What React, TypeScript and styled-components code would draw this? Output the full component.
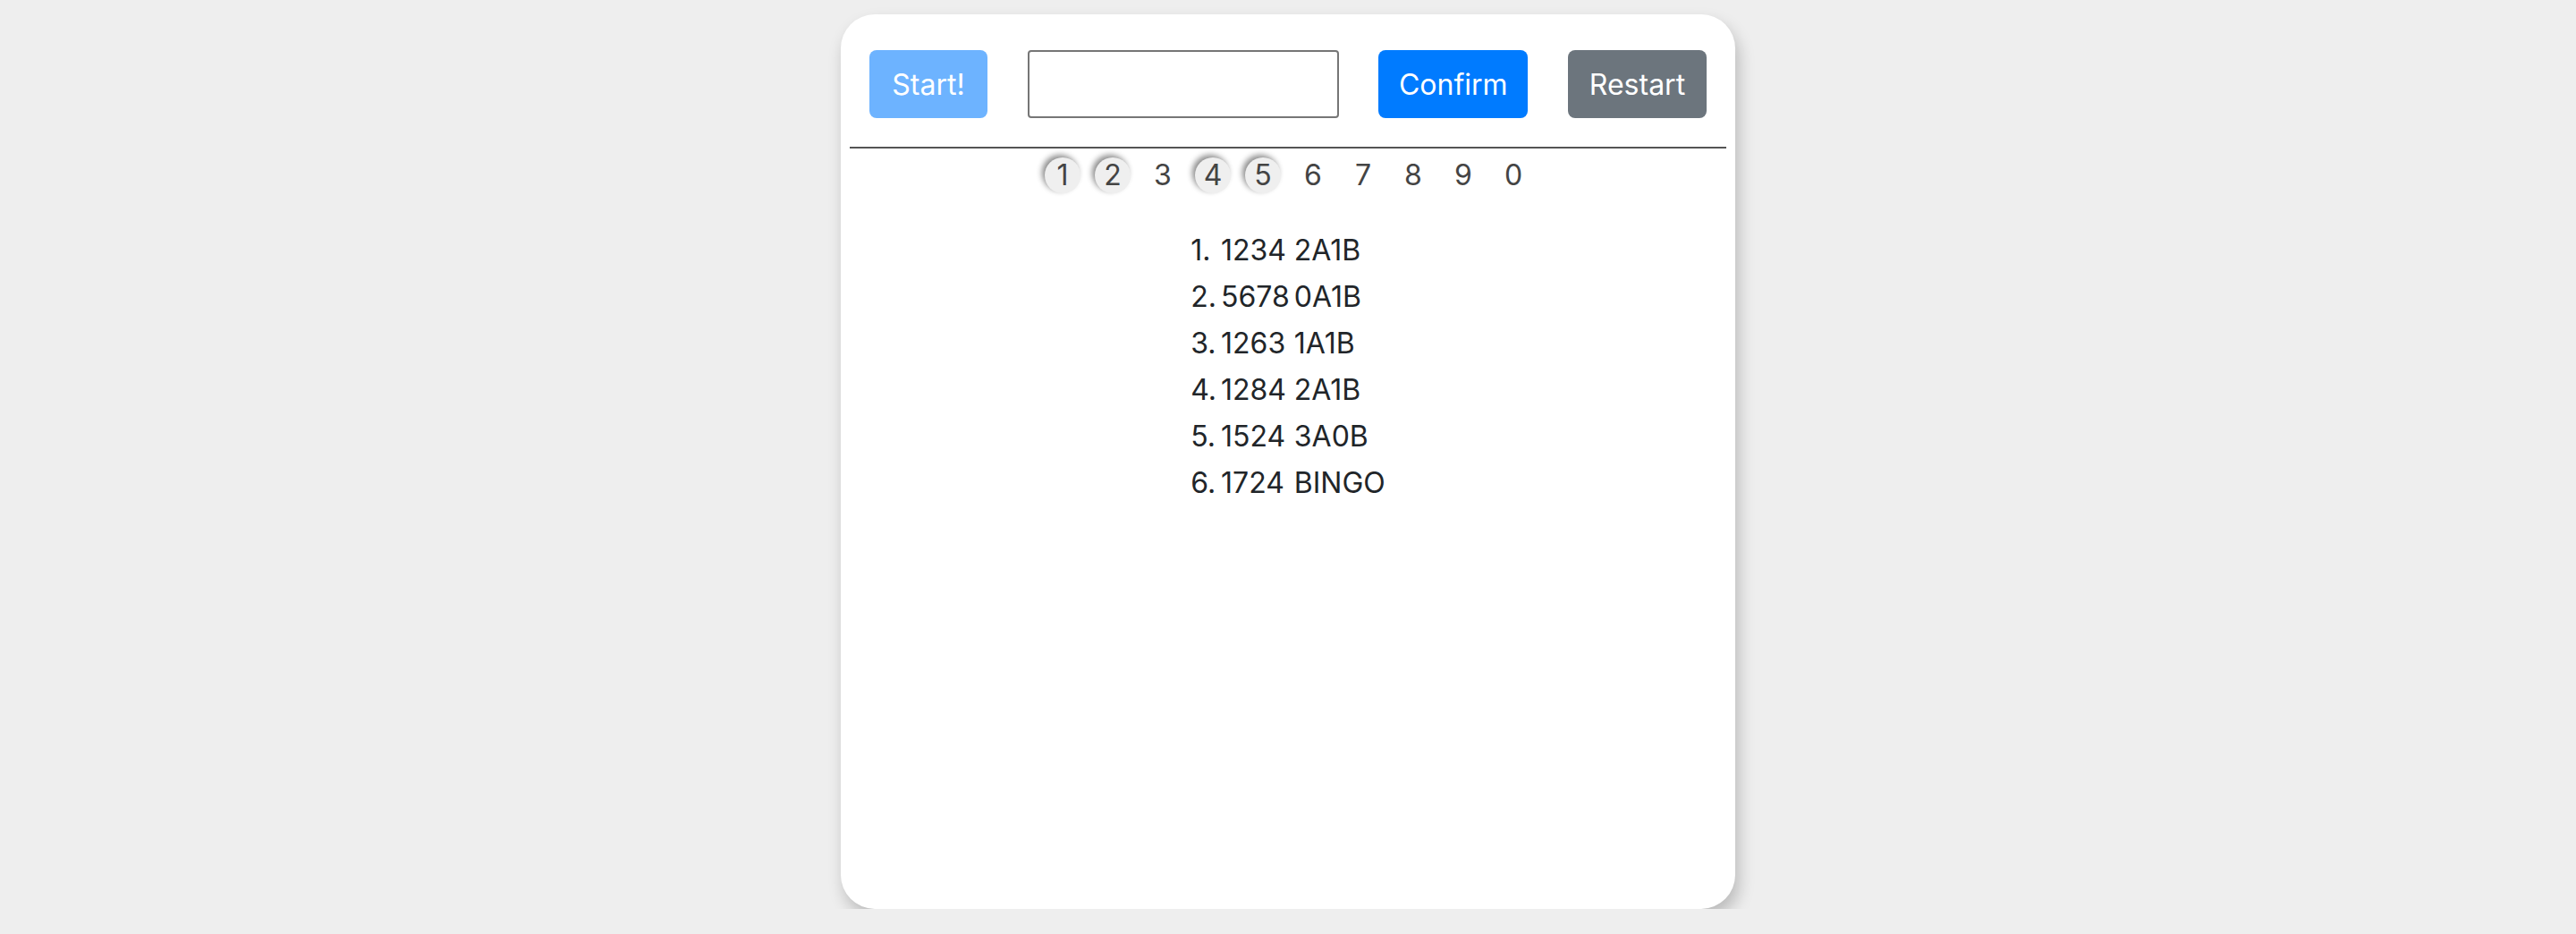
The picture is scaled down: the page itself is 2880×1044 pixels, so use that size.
import React from "react";
import styled, { createGlobalStyle } from "styled-components";

const GlobalStyle = createGlobalStyle`
  html, body {
    margin: 0;
    padding: 0;
    background: #eeeeee;
    font-family: Inter, "Noto Sans", "Liberation Sans", sans-serif;
  }
  * { box-sizing: border-box; }
`;

const Card = styled.div`
  width: 1000px;
  height: 1000px;
  margin: 16px auto 0;
  background: #ffffff;
  border-radius: 38px;
  box-shadow: 4px 10px 18px rgba(0, 0, 0, 0.22);
  padding-top: 40px;
  display: flex;
  flex-direction: column;
  align-items: stretch;
`;

const Toolbar = styled.div`
  display: flex;
  justify-content: space-between;
  align-items: center;
  padding: 0 32px;
  height: 76px;
`;

const Button = styled.button<{
  $variant: "primary" | "secondary";
  $width: number;
  $disabled?: boolean;
}>`
  width: ${(p) => p.$width}px;
  height: 76px;
  padding: 0;
  border: none;
  border-radius: 8px;
  font-family: inherit;
  font-size: 32px;
  font-weight: 400;
  color: #ffffff;
  background: ${(p) => (p.$variant === "primary" ? "#007bff" : "#6c757d")};
  opacity: ${(p) => (p.$disabled ? 0.57 : 1)};
  cursor: pointer;
`;

const GuessInput = styled.input`
  width: 348px;
  height: 76px;
  border: 2px solid #767676;
  border-radius: 4px;
  background: #ffffff;
  font-family: inherit;
  font-size: 32px;
  padding: 0 6px;
`;

const Divider = styled.hr`
  margin: 32px 10px 0;
  border: none;
  border-top: 2px solid #555555;
  height: 0;
`;

const DigitRow = styled.div`
  display: flex;
  justify-content: center;
  margin-top: 10px;
`;

const Digit = styled.span<{ $used?: boolean }>`
  width: 40px;
  height: 40px;
  margin: 0 8px;
  display: inline-flex;
  align-items: center;
  justify-content: center;
  border-radius: 50%;
  font-size: 32px;
  line-height: 1;
  color: #444444;
  background: ${(p) => (p.$used ? "#efefef" : "transparent")};
  box-shadow: ${(p) => (p.$used ? "-3px -3px 6px rgba(0, 0, 0, 0.45)" : "none")};
`;

const History = styled.ol`
  align-self: center;
  display: grid;
  grid-template-columns: auto auto auto;
  column-gap: 5px;
  margin: 38px 0 0;
  padding: 0;
  list-style: none;
  color: #212529;
  font-size: 32px;
  line-height: 52px;
`;

const Entry = styled.li`
  display: contents;
`;

const digits = ["1", "2", "3", "4", "5", "6", "7", "8", "9", "0"];
const used = new Set(["1", "2", "4", "5"]);

const history = [
  ["1234", "2A1B"],
  ["5678", "0A1B"],
  ["1263", "1A1B"],
  ["1284", "2A1B"],
  ["1524", "3A0B"],
  ["1724", "BINGO"],
];

export default function App() {
  return (
    <>
      <GlobalStyle />
      <Card>
        <Toolbar>
          <Button $variant="primary" $width={132} $disabled>
            Start!
          </Button>
          <GuessInput type="text" />
          <Button $variant="primary" $width={167}>
            Confirm
          </Button>
          <Button $variant="secondary" $width={155}>
            Restart
          </Button>
        </Toolbar>
        <Divider />
        <DigitRow>
          {digits.map((d) => (
            <Digit key={d} $used={used.has(d)}>
              {d}
            </Digit>
          ))}
        </DigitRow>
        <History>
          {history.map(([guess, result], i) => (
            <Entry key={i}>
              <span>{i + 1}.</span>
              <span>{guess}</span>
              <span>{result}</span>
            </Entry>
          ))}
        </History>
      </Card>
    </>
  );
}
